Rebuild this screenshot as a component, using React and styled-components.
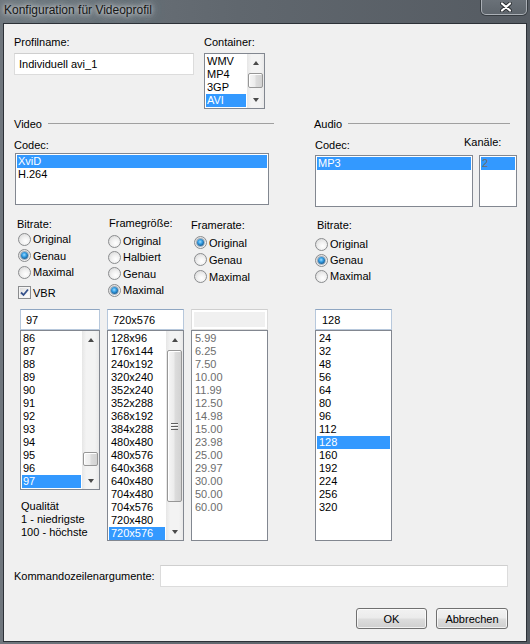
import React from "react";
import styled, { createGlobalStyle } from "styled-components";

const GlobalStyle = createGlobalStyle`
  html, body {
    margin: 0;
    padding: 0;
    background: #5e656c;
  }
  body {
    font-family: "Liberation Sans", Arial, sans-serif;
    font-size: 11px;
    color: #000;
  }
  * {
    box-sizing: border-box;
  }
`;

const Window = styled.div`
  width: 530px;
  height: 644px;
  display: flex;
  flex-direction: column;
  background: linear-gradient(to right, #6f767d 0%, #60676e 45%, #555b62 100%);
`;

const TitleBar = styled.div`
  height: 23px;
  flex: none;
  display: flex;
  align-items: flex-start;
  justify-content: space-between;
  padding-left: 4px;
  padding-right: 3px;
`;

const Title = styled.div`
  font-size: 12px;
  line-height: 14px;
  padding-top: 3px;
  color: #161616;
  white-space: nowrap;
  text-shadow: 0 0 4px rgba(235, 238, 240, 0.95), 0 0 8px rgba(220, 224, 228, 0.8),
    0 0 14px rgba(210, 214, 218, 0.6);
`;

const CloseButton = styled.div`
  width: 46px;
  height: 16px;
  margin-top: -1px;
  border: 1px solid rgba(225, 230, 235, 0.55);
  border-radius: 0 0 5px 5px;
  box-shadow: 0 0 0 1px rgba(30, 34, 38, 0.55);
  background: linear-gradient(#6a7178, #5e656c);
  display: flex;
  align-items: center;
  justify-content: center;
  padding-left: 4px;
`;

const Client = styled.div`
  flex: 1;
  margin: 0 3px 2px 3px;
  border: 1px solid #2c3137;
  background: #f0f0f0;
  padding: 12px 0 0 10px;
  display: flex;
  flex-direction: column;
`;

const Row = styled.div`
  display: flex;
  align-items: flex-start;
  gap: ${(p) => p.$gap || 0}px;
  margin-top: ${(p) => p.$top || 0}px;
`;

const Column = styled.div`
  display: flex;
  flex-direction: column;
  flex: none;
  width: ${(p) => (p.$w ? `${p.$w}px` : "auto")};
  margin-left: ${(p) => p.$left || 0}px;
  margin-top: ${(p) => p.$top || 0}px;
  height: ${(p) => (p.$h ? `${p.$h}px` : "auto")};
`;

const Label = styled.div`
  height: 13px;
  line-height: 13px;
  white-space: nowrap;
  margin-top: ${(p) => p.$top || 0}px;
  margin-left: ${(p) => p.$left || 0}px;
`;

const TextBox = styled.div`
  width: ${(p) => p.$w}px;
  height: ${(p) => p.$h || 21}px;
  margin-top: ${(p) => p.$top || 0}px;
  background: ${(p) => (p.$disabled ? "#f0f0f0" : "#fff")};
  border: 1px solid ${(p) => (p.$blue ? "#b7c8dc" : "#dcdcdc")};
  border-top-color: ${(p) => (p.$blue ? "#8fa6c2" : "#cfcfcf")};
  box-shadow: ${(p) => (p.$disabled ? "inset 0 0 0 2px #fff" : "none")};
  padding-left: ${(p) => p.$pad || 5}px;
  display: flex;
  align-items: center;
  white-space: nowrap;
`;

const ListBox = styled.div`
  width: ${(p) => p.$w}px;
  height: ${(p) => p.$h}px;
  margin-top: ${(p) => p.$top || 0}px;
  margin-left: ${(p) => p.$left || 0}px;
  border: 1px solid #828790;
  background: #fff;
  display: flex;
  overflow: hidden;
`;

const Items = styled.div`
  flex: 1;
  min-width: 0;
  padding: 1px;
  overflow: hidden;
`;

const Item = styled.div`
  height: 13px;
  line-height: 13px;
  padding-left: ${(p) => p.$pad ?? 2}px;
  white-space: nowrap;
  background: ${(p) => (p.$selected ? "#3399ff" : "transparent")};
  color: ${(p) => (p.$muted ? "#6d6d6d" : p.$selected ? "#fff" : "#000")};
`;

const ScrollTrack = styled.div`
  width: 17px;
  flex: none;
  display: flex;
  flex-direction: column;
  background: linear-gradient(to right, #e6e6e6 0%, #f3f3f3 25%, #f3f3f3 75%, #e9e9e9 100%);
`;

const ScrollArrow = styled.div`
  height: 17px;
  flex: none;
  display: flex;
  align-items: center;
  justify-content: center;
  &::before {
    content: "";
    border-left: 3.5px solid transparent;
    border-right: 3.5px solid transparent;
    ${(p) =>
      p.$down
        ? "border-top: 4px solid #4a4a4a;"
        : "border-bottom: 4px solid #4a4a4a;"}
  }
`;

const ScrollMiddle = styled.div`
  flex: 1;
  padding-top: ${(p) => p.$offset}px;
`;

const Thumb = styled.div`
  height: ${(p) => p.$h}px;
  margin: 0 1px;
  border: 1px solid #979797;
  border-radius: 2px;
  background: linear-gradient(to right, #f6f6f6 0%, #ececec 45%, #dcdcdc 55%, #d2d2d2 100%);
  box-shadow: inset 1px 1px 0 #fff;
  display: flex;
  align-items: center;
  justify-content: center;
`;

const Grip = styled.div`
  width: 7px;
  height: 7px;
  background: repeating-linear-gradient(#5e5e5e 0 1px, #f8f8f8 1px 2px, transparent 2px 3px);
`;

const SectionHeader = styled.div`
  height: 13px;
  display: flex;
  align-items: center;
  gap: 6px;
  margin-right: ${(p) => p.$right || 0}px;
  margin-left: ${(p) => p.$left || 0}px;
`;

const SectionLine = styled.div`
  flex: 1;
  height: 1px;
  background: #a0a0a0;
`;

const Options = styled.div`
  display: flex;
  flex-direction: column;
  margin-top: ${(p) => p.$top || 0}px;
  padding-left: ${(p) => p.$indent || 0}px;
`;

const Option = styled.div`
  height: ${(p) => p.$step}px;
  display: flex;
  align-items: center;
  gap: 2px;
  white-space: nowrap;
`;

const RadioCircle = styled.span`
  width: 13px;
  height: 13px;
  flex: none;
  border-radius: 50%;
  border: 1px solid #8a8c8e;
  background: radial-gradient(circle at 60% 65%, #ffffff 0%, #f1f1f1 40%, #d3d3d3 100%);
  display: flex;
  align-items: center;
  justify-content: center;
  &::after {
    content: "";
    width: 7px;
    height: 7px;
    border-radius: 50%;
    display: ${(p) => (p.$checked ? "block" : "none")};
    background: radial-gradient(circle at 45% 40%, #9fdcff 0%, #36a0e6 35%, #16598f 75%, #0c3556 100%);
    box-shadow: 0 0 0 1px rgba(20, 60, 100, 0.35);
  }
`;

const CheckBox = styled.span`
  width: 13px;
  height: 13px;
  flex: none;
  border: 1px solid #8a8c8e;
  background: linear-gradient(135deg, #d8d8d8 0%, #f4f4f4 60%, #ffffff 100%);
  box-shadow: inset 0 0 0 1px #f4f4f4;
  display: flex;
  align-items: center;
  justify-content: center;
`;

const Note = styled.div`
  margin-top: 10px;
  margin-left: 1px;
  line-height: 13px;
  white-space: nowrap;
`;

const CommandRow = styled.div`
  display: flex;
  align-items: center;
  margin-top: 24px;
  height: 22px;
`;

const CommandLabel = styled.div`
  width: 146px;
  white-space: nowrap;
`;

const ButtonRow = styled.div`
  display: flex;
  justify-content: flex-end;
  gap: 9px;
  margin-top: 21px;
  padding-right: 18px;
`;

const Button = styled.div`
  width: ${(p) => p.$w}px;
  height: 21px;
  border: 1px solid #707070;
  border-radius: 3px;
  background: linear-gradient(#f2f2f2 0%, #ebebeb 48%, #dddddd 52%, #cfcfcf 100%);
  box-shadow: inset 0 0 0 1px rgba(255, 255, 255, 0.7);
  display: flex;
  align-items: center;
  justify-content: center;
  white-space: nowrap;
`;

const containerItems = ["WMV", "MP4", "3GP", "AVI"];
const bitrateItems = ["86", "87", "88", "89", "90", "91", "92", "93", "94", "95", "96", "97"];
const frameSizes = [
  "128x96", "176x144", "240x192", "320x240", "352x240", "352x288", "368x192", "384x288",
  "480x480", "480x576", "640x368", "640x480", "704x480", "704x576", "720x480", "720x576",
];
const frameRates = [
  "5.99", "6.25", "7.50", "10.00", "11.99", "12.50", "14.98", "15.00",
  "23.98", "25.00", "29.97", "30.00", "50.00", "60.00",
];
const audioRates = ["24", "32", "48", "56", "64", "80", "96", "112", "128", "160", "192", "224", "256", "320"];

function Scrollbar({ offset, thumb, grip }) {
  return (
    <ScrollTrack>
      <ScrollArrow />
      <ScrollMiddle $offset={offset}>
        <Thumb $h={thumb}>{grip && <Grip />}</Thumb>
      </ScrollMiddle>
      <ScrollArrow $down />
    </ScrollTrack>
  );
}

function List({ items, selected, muted, pad, scroll, ...rest }) {
  return (
    <ListBox {...rest}>
      <Items>
        {items.map((it) => (
          <Item key={it} $selected={it === selected} $muted={muted} $pad={pad}>
            {it}
          </Item>
        ))}
      </Items>
      {scroll && <Scrollbar {...scroll} />}
    </ListBox>
  );
}

function RadioGroup({ label, options, checked, w, left, top, labelLeft, optTop, indent, step, children }) {
  return (
    <Column $w={w} $left={left} $top={top}>
      <Label $left={labelLeft}>{label}</Label>
      <Options $top={optTop} $indent={indent}>
        {options.map((o) => (
          <Option key={o} $step={step}>
            <RadioCircle $checked={o === checked} />
            {o}
          </Option>
        ))}
        {children}
      </Options>
    </Column>
  );
}

export default function App() {
  return (
    <>
      <GlobalStyle />
      <Window>
        <TitleBar>
          <Title>Konfiguration für Videoprofil</Title>
          <CloseButton>
            <svg width="12" height="10" viewBox="0 0 12 10">
              <path d="M2 1.5 L10 8.5 M10 1.5 L2 8.5" stroke="#2b2f33" strokeWidth="4" strokeLinecap="round" />
              <path d="M2 1.5 L10 8.5 M10 1.5 L2 8.5" stroke="#ffffff" strokeWidth="2.2" strokeLinecap="round" />
            </svg>
          </CloseButton>
        </TitleBar>
        <Client>
          <Row $gap={10}>
            <Column>
              <Label>Profilname:</Label>
              <TextBox $w={180} $h={22} $top={4} $pad={4}>
                Individuell avi_1
              </TextBox>
            </Column>
            <Column>
              <Label>Container:</Label>
              <List
                $w={61}
                $h={56}
                $top={4}
                items={containerItems}
                selected="AVI"
                pad={1}
                scroll={{ offset: 2, thumb: 15 }}
              />
            </Column>
          </Row>

          <Row $top={8}>
            <Column $w={260}>
              <SectionHeader>
                Video
                <SectionLine />
              </SectionHeader>
              <Label $top={9}>Codec:</Label>
              <List $w={254} $h={52} $top={1} $left={1} items={["XviD", "H.264"]} selected="XviD" pad={1} />

              <Row $top={12} style={{ height: 92 }}>
                <RadioGroup
                  label="Bitrate:"
                  options={["Original", "Genau", "Maximal"]}
                  checked="Genau"
                  w={91}
                  left={3}
                  top={1}
                  optTop={0}
                  indent={1}
                  step={16.5}
                >
                  <Option $step={16} style={{ marginTop: 4 }}>
                    <CheckBox>
                      <svg width="9" height="9" viewBox="0 0 9 9">
                        <path d="M1 4.5 L3.5 7 L8 1.5" fill="none" stroke="#34508a" strokeWidth="1.8" />
                      </svg>
                    </CheckBox>
                    VBR
                  </Option>
                </RadioGroup>
                <RadioGroup
                  label="Framegröße:"
                  options={["Original", "Halbiert", "Genau", "Maximal"]}
                  checked="Maximal"
                  w={83}
                  labelLeft={1}
                  optTop={3}
                  step={16.3}
                />
                <RadioGroup
                  label="Framerate:"
                  options={["Original", "Genau", "Maximal"]}
                  checked="Original"
                  w={80}
                  top={2}
                  optTop={2}
                  indent={3}
                  step={17}
                />
              </Row>

              <Row>
                <Column $w={80} $left={6}>
                  <TextBox $w={80} $blue>97</TextBox>
                  <List
                    $w={80}
                    $h={160}
                    items={bitrateItems}
                    selected="97"
                    pad={1}
                    scroll={{ offset: 104, thumb: 14 }}
                  />
                  <Note>
                    Qualität
                    <br />1 - niedrigste
                    <br />100 - höchste
                  </Note>
                </Column>
                <Column $w={77} $left={7}>
                  <TextBox $w={77} $blue>720x576</TextBox>
                  <List
                    $w={77}
                    $h={211}
                    items={frameSizes}
                    selected="720x576"
                    pad={2}
                    scroll={{ offset: 2, thumb: 152, grip: true }}
                  />
                </Column>
                <Column $w={77} $left={7}>
                  <TextBox $w={77} $disabled />
                  <List $w={77} $h={211} items={frameRates} muted pad={2} />
                </Column>
              </Row>
            </Column>

            <Column $w={202} $left={41}>
              <SectionHeader $right={7} $left={-1}>
                Audio
                <SectionLine />
              </SectionHeader>
              <Row>
                <Column>
                  <Label $top={9}>Codec:</Label>
                  <List $w={158} $h={52} $top={3} items={["MP3"]} selected="MP3" pad={1} />
                </Column>
                <Column $left={6}>
                  <Label $top={6} $left={-15}>
                    Kanäle:
                  </Label>
                  <List $w={38} $h={52} $top={6} items={["2"]} selected="2" muted pad={1} />
                </Column>
              </Row>
              <Row style={{ height: 102 }}>
                <RadioGroup
                  label="Bitrate:"
                  options={["Original", "Genau", "Maximal"]}
                  checked="Genau"
                  w={90}
                  top={12}
                  labelLeft={2}
                  optTop={4}
                  step={16.2}
                />
              </Row>
              <Column $w={77}>
                <TextBox $w={77} $blue $pad={6}>
                  128
                </TextBox>
                <List $w={77} $h={211} items={audioRates} selected="128" pad={2} />
              </Column>
            </Column>
          </Row>

          <CommandRow>
            <CommandLabel>Kommandozeilenargumente:</CommandLabel>
            <TextBox $w={348} $h={22} />
          </CommandRow>

          <ButtonRow>
            <Button $w={71}>OK</Button>
            <Button $w={72}>Abbrechen</Button>
          </ButtonRow>
        </Client>
      </Window>
    </>
  );
}
